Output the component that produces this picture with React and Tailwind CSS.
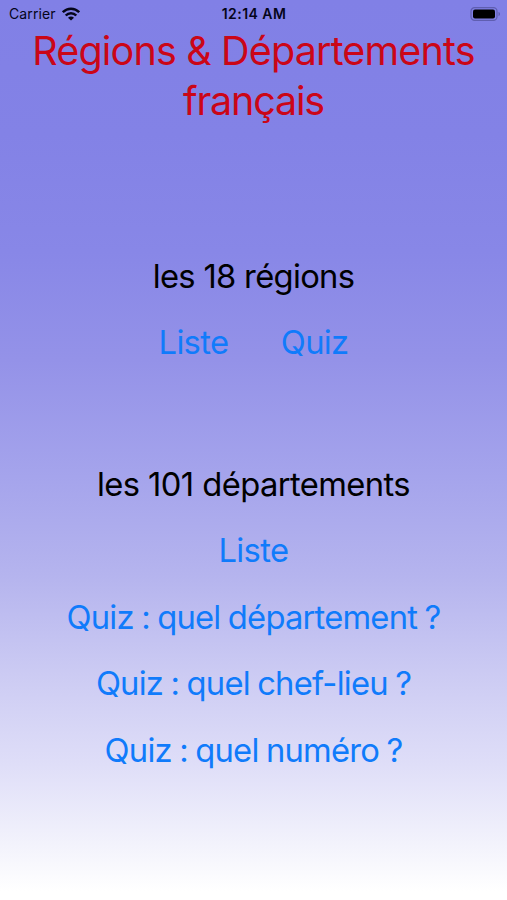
function WifiIcon() {
  return (
    <svg className="ml-[6px] h-[14px] w-[18px]" viewBox="0 0 18 14" fill="none" stroke="#05051a" strokeWidth="2.5">
      <path d="M0.8 5.2 C5.4 0.5 12.6 0.5 17.2 5.2" />
      <path d="M3.7 8.5 C6.7 5.4 11.3 5.4 14.3 8.5" />
      <path d="M9 13.6 L6 10.8 C7.7 9.2 10.3 9.2 12 10.8 Z" fill="#05051a" stroke="none" />
    </svg>
  );
}

function BatteryIcon() {
  return (
    <svg className="h-[14px] w-[31px]" viewBox="0 0 31 14" fill="none">
      <rect x="1" y="0.7" width="26" height="12.6" rx="3.6" stroke="#5f5eb0" strokeWidth="1.2" />
      <rect x="3" y="2.6" width="22" height="8.8" rx="2" fill="#000" />
      <path d="M28.5 5 C30.5 5.6 30.5 8.4 28.5 9 Z" fill="#5f5eb0" />
    </svg>
  );
}

function Row({ children, className = "" }) {
  return (
    <div className={`flex h-[66.4px] items-center justify-center whitespace-pre text-[32.75px] leading-none ${className}`}>
      {children}
    </div>
  );
}

function QuizLink({ children }) {
  return (
    <Row className="text-[#107bfb]">
      <button className="tracking-[-0.8px] [word-spacing:-1px]">{children}</button>
    </Row>
  );
}

export default function App() {
  return (
    <main className="flex h-[900px] w-[507px] flex-col overflow-hidden bg-[linear-gradient(to_bottom,#8180e6_0%,#8382e6_15%,#8887e7_28%,#9492e8_40%,#a5a4ec_53%,#b5b4ee_64%,#cccbf3_75%,#dfdef8_85%,#f3f3fc_94%,#ffffff_99%)] font-['Inter','Liberation_Sans',sans-serif] text-black">
      <header className="grid h-[26px] grid-cols-[1fr_auto_1fr] items-center pt-px pl-[9px] pr-[8px] text-[14px] leading-none text-[#05051a]">
        <div className="flex items-center">
          <span className="tracking-[0.1px]">Carrier</span>
          <WifiIcon />
        </div>
        <span className="text-center text-[14px] font-semibold tracking-[0.45px]">12:14 AM</span>
        <div className="-mr-[2px] flex justify-end">
          <BatteryIcon />
        </div>
      </header>
      <h1 className="text-center text-[39.5px] leading-[50px] text-[#cb0617]">
        <span className="block whitespace-nowrap tracking-[-0.84px]">Régions &amp; Départements</span>
        <span className="block tracking-[-1.2px]">français</span>
      </h1>
      <section className="mt-[117px]">
        <Row className="tracking-[-0.7px]">les 18 régions</Row>
        <Row className="gap-[52.5px] tracking-[-0.7px] text-[#107bfb]">
          <button>Liste</button>
          <button>Quiz</button>
        </Row>
      </section>
      <section className="mt-[75.5px]">
        <Row className="tracking-[-0.6px]">les 101 départements</Row>
        <Row className="tracking-[-0.6px] text-[#107bfb]"><button>Liste</button></Row>
        <QuizLink>Quiz : quel département ?</QuizLink>
        <QuizLink>Quiz : quel chef-lieu ?</QuizLink>
        <QuizLink>Quiz : quel numéro ?</QuizLink>
      </section>
    </main>
  );
}
